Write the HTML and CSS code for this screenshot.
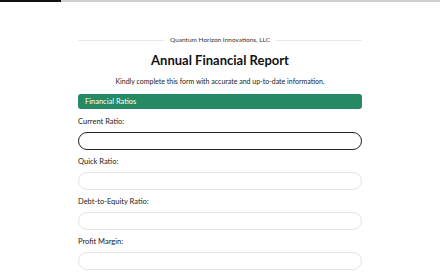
FILE: index.html
```html
<!DOCTYPE html>
<html>
<head>
<meta charset="utf-8">
<link rel="stylesheet" href="styles.css">
</head>
<body>
<div class="progress"><div class="progress-fill"></div></div>
<main class="form">
  <div class="company"><span class="rule"></span><span class="company-name">Quantum Horizon Innovations, LLC</span><span class="rule"></span></div>
  <h1 class="title">Annual Financial Report</h1>
  <p class="subtitle">Kindly complete this form with accurate and up-to-date information.</p>
  <div class="section">Financial Ratios</div>
  <div class="field">
    <label class="label">Current Ratio:</label>
    <input class="input input-focus" type="text">
  </div>
  <div class="field">
    <label class="label">Quick Ratio:</label>
    <input class="input" type="text">
  </div>
  <div class="field">
    <label class="label">Debt-to-Equity Ratio:</label>
    <input class="input" type="text">
  </div>
  <div class="field">
    <label class="label">Profit Margin:</label>
    <input class="input" type="text">
  </div>
</main>
</body>
</html>
```
FILE: styles.css
```css
* { box-sizing: border-box; }
body {
  margin: 0;
  background: #fff;
  font-family: Lato, "Open Sans", sans-serif;
  color: #222;
}
.progress {
  height: 2px;
  background: #cfcfcf;
}
.progress-fill {
  width: 61px;
  height: 100%;
  background: #111;
}
.form {
  width: 284px;
  margin: 33px auto 0;
  display: flex;
  flex-direction: column;
}
.company {
  display: flex;
  align-items: center;
  gap: 6px;
  height: 10px;
}
.rule {
  flex: 1;
  height: 1px;
  background: #e8e8e8;
}
.company-name {
  font-size: 6.5px;
  line-height: 10px;
  color: #333;
}
.title {
  margin: 6px 0 0;
  font-size: 13px;
  line-height: 18px;
  font-weight: 700;
  text-align: center;
  color: #111;
}
.subtitle {
  margin: 7px 0 0;
  font-size: 7px;
  line-height: 10px;
  text-align: center;
  color: #222;
}
.section {
  margin-top: 8px;
  height: 15px;
  background: #258a63;
  border-radius: 3px;
  color: #fff;
  font-size: 7.5px;
  line-height: 15px;
  padding-left: 7px;
}
.field {
  display: flex;
  flex-direction: column;
  margin-top: 8px;
}
.field + .field { margin-top: 7px; }
.label {
  font-size: 7.5px;
  line-height: 10px;
  color: #222;
  margin-bottom: 5px;
}
.input {
  height: 18px;
  border: 1px solid #e3e3e3;
  border-radius: 9px;
  background: #fff;
  outline: none;
  padding: 0 8px;
}
.input-focus {
  border: 1.5px solid #222;
}
```
